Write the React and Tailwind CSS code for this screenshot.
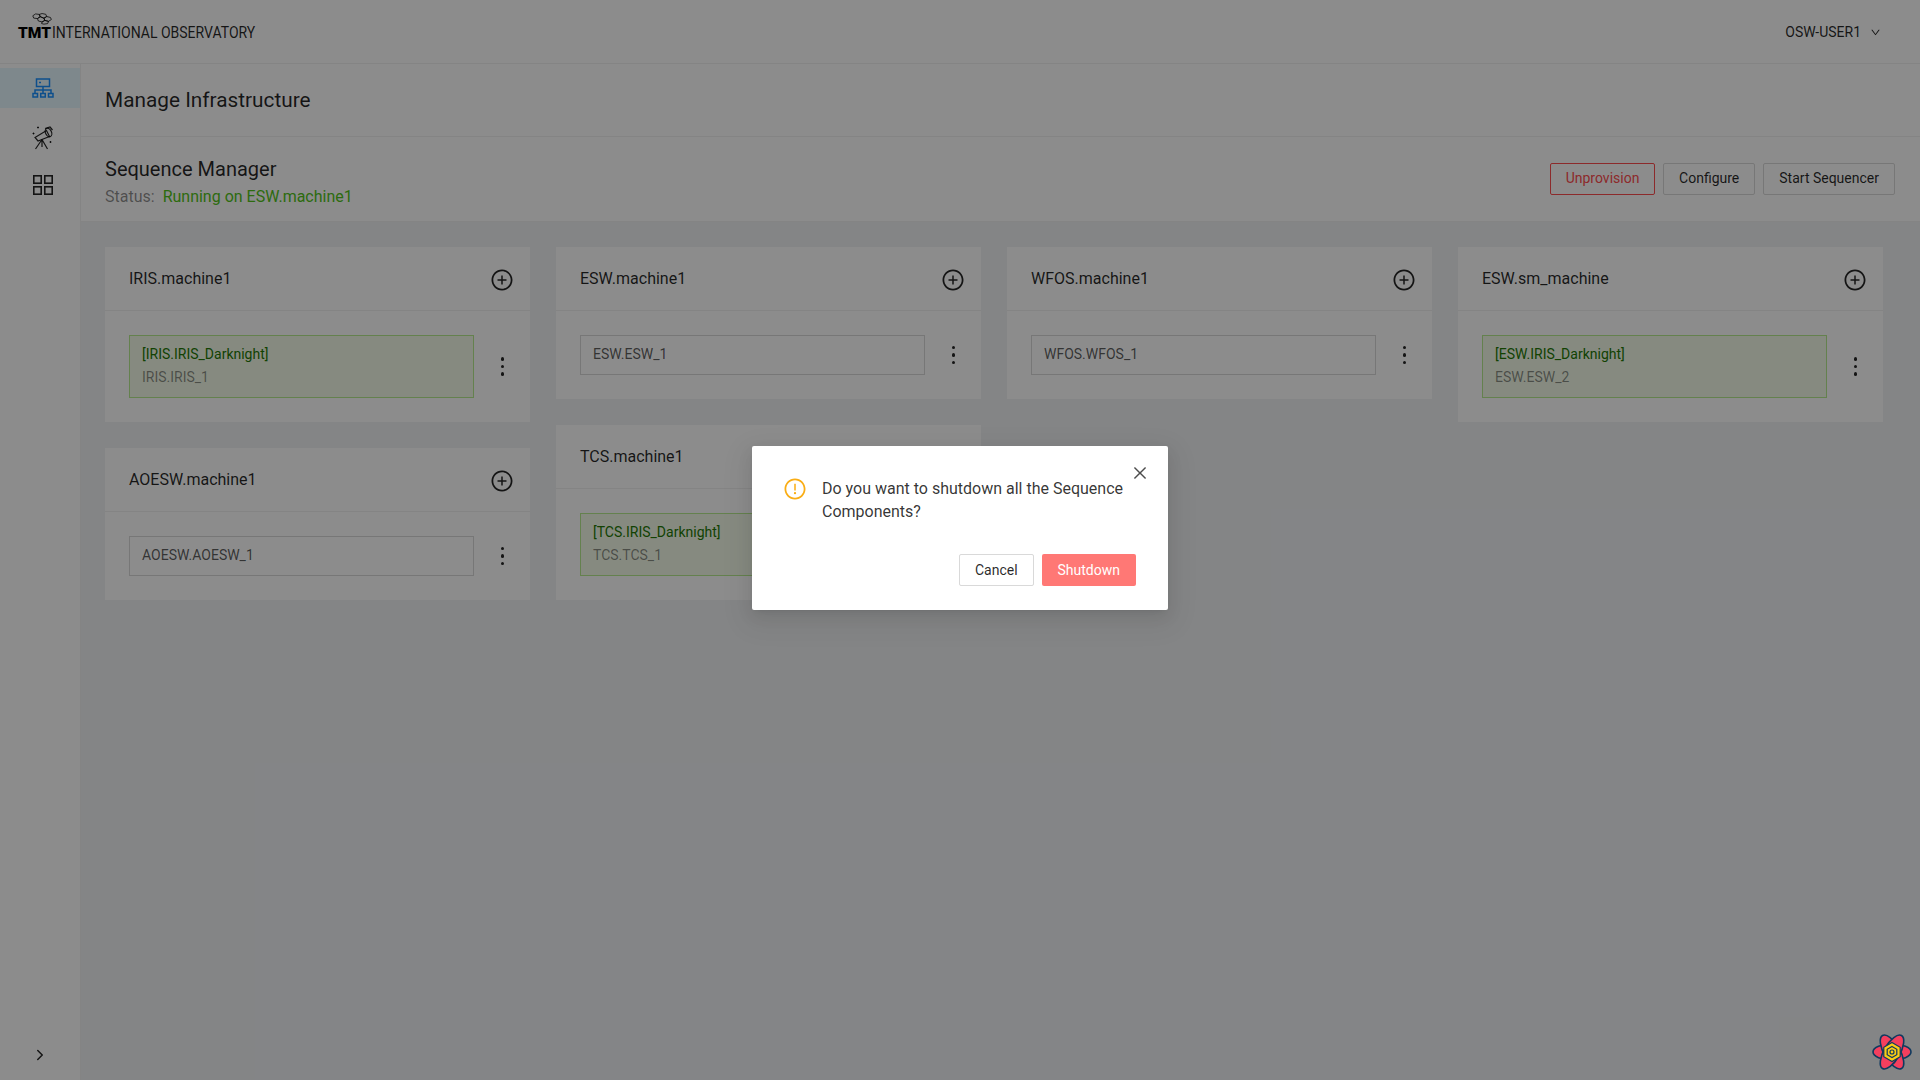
import React from 'react';
import {
  AiOutlineClose,
  AiOutlineDown,
  AiOutlineExclamationCircle,
  AiOutlinePlusCircle,
} from 'react-icons/ai';
import { ChevronRight } from 'lucide-react';

const columns = [
  [
    { name: 'IRIS.machine1', obsMode: '[IRIS.IRIS_Darknight]', component: 'IRIS.IRIS_1' },
    { name: 'AOESW.machine1', component: 'AOESW.AOESW_1' },
  ],
  [
    { name: 'ESW.machine1', component: 'ESW.ESW_1' },
    { name: 'TCS.machine1', obsMode: '[TCS.IRIS_Darknight]', component: 'TCS.TCS_1' },
  ],
  [{ name: 'WFOS.machine1', component: 'WFOS.WFOS_1' }],
  [{ name: 'ESW.sm_machine', obsMode: '[ESW.IRIS_Darknight]', component: 'ESW.ESW_2' }],
];

const HexLogo = () => (
  <svg width="24" height="13" viewBox="0 0 24 14" fill="none" stroke="#000" strokeWidth="0.8" className="ml-[13px] -mb-[1px] block">
    <path d="M1 3 L4 1 L8 1.5 L9 4 L6 6 L2 5.5 Z" />
    <path d="M8 1.5 L11 0.6 L15 1.4 L16 3.8 L13 5.6 L9 4 Z" />
    <path d="M6 6 L9 4 L13 5.6 L14 8 L11 9.6 L7 8.6 Z" />
    <path d="M13 5.6 L16 3.8 L20 4.8 L21 7 L18 9 L14 8 Z" />
    <path d="M11 9.6 L14 8 L18 9 L17 11.4 L13 12 L10.5 11.4 Z" />
  </svg>
);

const ClusterIcon = () => (
  <svg width="22" height="20" viewBox="0 0 22 20" fill="none" stroke="currentColor" strokeWidth="1.5">
    <rect x="4.5" y="1" width="13" height="7.5" />
    <path d="M7 4.5h2" />
    <path d="M11 8.5v3.5M3 16v-4h16v4M11 12v4" />
    <rect x="1" y="15.5" width="4.5" height="3.5" />
    <rect x="8.75" y="15.5" width="4.5" height="3.5" />
    <rect x="16.5" y="15.5" width="4.5" height="3.5" />
  </svg>
);

const TelescopeIcon = () => (
  <svg width="22" height="24" viewBox="0 0 22 24" fill="none" stroke="currentColor" strokeWidth="1.2">
    <path d="M3 11.5 L14.5 4.5 L17.5 10.5 L6 15 Z" />
    <ellipse cx="16.5" cy="6.5" rx="3" ry="4.5" transform="rotate(-25 16.5 6.5)" />
    <path d="M13 2.5 L18 1 L20.5 4" />
    <path d="M10 13.5 L3.5 23 M10 13.5 L10 21 M10 13.5 L15.5 23" />
    <path d="M1.5 6.5v2M.5 7.5h2M6 .5v2M5 1.5h2M18.5 15v2M17.5 16h2" strokeWidth="0.9" />
  </svg>
);

const GridIcon = () => (
  <svg width="20" height="20" viewBox="0 0 20 20" fill="none" stroke="currentColor" strokeWidth="1.6">
    <rect x="0.8" y="0.8" width="7.4" height="7.4" />
    <rect x="11.8" y="0.8" width="7.4" height="7.4" />
    <rect x="0.8" y="11.8" width="7.4" height="7.4" />
    <rect x="11.8" y="11.8" width="7.4" height="7.4" />
  </svg>
);

const AtomBadge = () => (
  <svg width="42" height="42" viewBox="0 0 42 42">
    <g fill="#f43f5e" stroke="#0f3a5f" strokeWidth="1.6">
      <ellipse cx="21" cy="21" rx="19" ry="8" />
      <ellipse cx="21" cy="21" rx="19" ry="8" transform="rotate(60 21 21)" />
      <ellipse cx="21" cy="21" rx="19" ry="8" transform="rotate(120 21 21)" />
    </g>
    <path d="M21 11.5 L29.2 16.25 V25.75 L21 30.5 L12.8 25.75 V16.25 Z" fill="#facc15" stroke="#0f3a5f" strokeWidth="1.2" />
    <path d="M21 15.5 L25.8 18.25 V23.75 L21 26.5 L16.2 23.75 V18.25 Z" fill="none" stroke="#0f3a5f" strokeWidth="1.2" />
    <circle cx="21" cy="21" r="2" fill="none" stroke="#0f3a5f" strokeWidth="1.2" />
  </svg>
);

const Kebab = () => (
  <div className="flex flex-col gap-[4px] items-center">
    <span className="w-[3.5px] h-[3.5px] rounded-full bg-black/85" />
    <span className="w-[3.5px] h-[3.5px] rounded-full bg-black/85" />
    <span className="w-[3.5px] h-[3.5px] rounded-full bg-black/85" />
  </div>
);

const MachineCard = ({ machine }) => (
  <div className="bg-white w-[425px]">
    <div className="h-[64px] px-[24px] flex items-center justify-between border-b border-[#f0f0f0]">
      <span className="text-[16px] text-black/85">{machine.name}</span>
      <AiOutlinePlusCircle className="text-[24px] text-black/85 mr-[-8px] mt-[2px]" />
    </div>
    <div className="p-[24px] flex items-center justify-between">
      {machine.obsMode ? (
        <div className="w-[345px] h-[63px] border border-[#b7eb8f] bg-[#f4fcea] px-[12px] pb-[2px] flex flex-col justify-center text-[14px] leading-[23px]">
          <span className="text-[#237804]">{machine.obsMode}</span>
          <span className="text-black/45">{machine.component}</span>
        </div>
      ) : (
        <div className="w-[345px] h-[40px] border border-[#d9d9d9] bg-white px-[12px] pb-[2px] flex items-center text-[14px] text-black/65">
          {machine.component}
        </div>
      )}
      <div className="mr-[2px]">
        <Kebab />
      </div>
    </div>
  </div>
);

const OutlineButton = ({ children, className = 'px-[15px] border-[#d9d9d9] text-black/85' }) => (
  <button className={`h-[32px] pb-[1px] border rounded-[2px] bg-white text-[14px] ${className}`}>{children}</button>
);

export default function App() {
  return (
    <div className="relative w-[1920px] h-[1080px] overflow-hidden bg-[#f0f2f5] font-['Roboto',sans-serif] flex flex-col">
      {/* Header */}
      <header className="h-[64px] shrink-0 bg-white border-b border-[#f0f0f0] flex items-center justify-between pl-[18px] pr-[39px]">
        <div className="flex flex-col -mt-[10px]">
          <HexLogo />
          <div className="flex items-baseline leading-[16px]">
            <span className="text-[15.5px] font-black text-black w-[34px]">TMT</span>
            <span className="text-[16px] text-black/85 inline-block origin-left scale-x-[0.875] whitespace-nowrap">INTERNATIONAL OBSERVATORY</span>
          </div>
        </div>
        <div className="flex items-center text-[14px] text-black/85 gap-[9px] mt-[2px]">
          OSW-USER1
          <AiOutlineDown className="text-[11px]" />
        </div>
      </header>

      <div className="flex flex-1 min-h-0">
        {/* Sidebar */}
        <aside className="w-[81px] shrink-0 bg-white border-r border-[#f0f0f0] flex flex-col pt-[4px]">
          <div className="h-[40px] bg-[#e6f7ff] text-[#1890ff] flex items-center justify-center pl-[5px]">
            <ClusterIcon />
          </div>
          <div className="h-[24px] mt-[18px] text-black/85 flex items-center justify-center pl-[6px]">
            <TelescopeIcon />
          </div>
          <div className="mt-[25px] h-[20px] text-black/85 flex items-center justify-center pl-[6px]">
            <GridIcon />
          </div>
          <div className="mt-auto h-[48px] pb-[2px] flex items-center justify-center">
            <ChevronRight size={18} strokeWidth={2} className="text-black/85" />
          </div>
        </aside>

        <main className="flex-1 min-w-0 flex flex-col">
          <div className="h-[72px] bg-white px-[24px] pt-[1px] flex items-center">
            <h1 className="text-[20.8px] font-normal text-black/85">Manage Infrastructure</h1>
          </div>
          <div className="h-[86px] bg-white border-y border-[#f0f0f0] pl-[24px] pr-[25px] flex items-center justify-between">
            <div className="flex flex-col gap-[2px] mt-[6px]">
              <span className="text-[20px] leading-[28px] text-black/85">Sequence Manager</span>
              <div className="text-[16px] leading-[24px]">
                <span className="text-black/45 mr-[8px]">Status:</span>
                <span className="text-[#52c41a]">Running on ESW.machine1</span>
              </div>
            </div>
            <div className="flex gap-[8px]">
              <OutlineButton className="w-[105px] border-[#ff4d4f] text-[#ff4d4f]">Unprovision</OutlineButton>
              <OutlineButton>Configure</OutlineButton>
              <OutlineButton>Start Sequencer</OutlineButton>
            </div>
          </div>

          <div className="flex gap-[26px] pl-[24px] pt-[25px]">
            {columns.map((column, i) => (
              <div key={i} className="flex flex-col gap-[26px]">
                {column.map((machine) => (
                  <MachineCard key={machine.name} machine={machine} />
                ))}
              </div>
            ))}
          </div>
        </main>
      </div>

      {/* Modal mask */}
      <div className="absolute inset-0 bg-black/45" />

      {/* Confirm dialog */}
      <div className="absolute left-[752px] top-[446px] w-[416px] h-[164px] bg-white rounded-[2px] shadow-[0_3px_6px_-4px_rgba(0,0,0,0.12),0_6px_16px_rgba(0,0,0,0.08),0_9px_28px_8px_rgba(0,0,0,0.05)] pt-[32px] pb-[24px] pl-[32px] pr-[32px] flex flex-col justify-between">
        <AiOutlineClose className="absolute right-[19px] top-[18px] text-[18px] text-black/70" />
        <div className="flex items-start">
          <AiOutlineExclamationCircle className="text-[24px] text-[#faad14] shrink-0 mr-[15px] -ml-[1px] -mt-[1px]" />
          <p className="text-[16px] leading-[23px] text-black/80 -mt-[1px]">
            Do you want to shutdown all the Sequence Components?
          </p>
        </div>
        <div className="flex justify-end gap-[8px]">
          <button className="h-[32px] px-[15px] border border-[#d9d9d9] rounded-[2px] bg-white text-[14px] text-black/85">Cancel</button>
          <button className="h-[32px] px-[16px] rounded-[2px] bg-[#ff7875] text-[14px] text-white">Shutdown</button>
        </div>
      </div>

      <div className="absolute left-[1871px] top-[1031px]">
        <AtomBadge />
      </div>
    </div>
  );
}
